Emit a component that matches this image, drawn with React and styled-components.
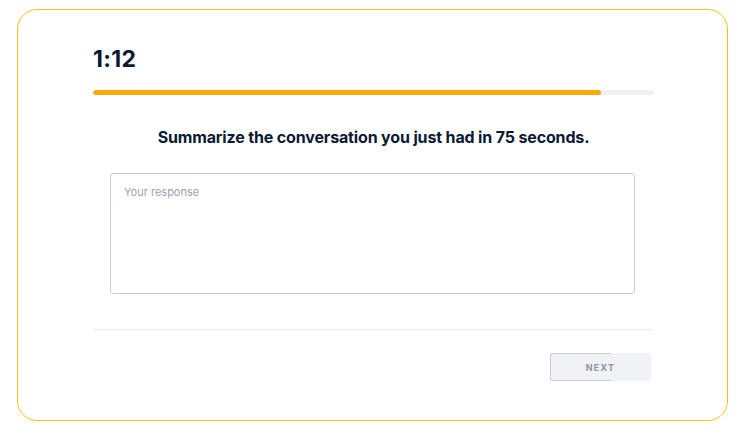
import React, { useState } from "react";
import styled, { createGlobalStyle } from "styled-components";

const GlobalStyle = createGlobalStyle`
  body {
    margin: 0;
    background: #ffffff;
    font-family: "Inter", "Noto Sans", sans-serif;
  }
`;

const Page = styled.div`
  padding: 9px 0 0 17px;
`;

const Card = styled.div`
  box-sizing: border-box;
  width: 711px;
  height: 412px;
  border: 1.6px solid #fcc10f;
  border-radius: 20px;
  padding: 34px 73px 0 75px;
  display: flex;
  flex-direction: column;
`;

const Timer = styled.div`
  font-size: 23px;
  line-height: 30px;
  font-weight: 700;
  color: #0b1a33;
  letter-spacing: 0.3px;
`;

const Track = styled.div`
  margin-top: 16px;
  height: 5px;
  border-radius: 3px;
  background: #eff2f5;
  overflow: hidden;
`;

const Fill = styled.div`
  height: 100%;
  border-radius: 3px;
  background: #fdaa06;
`;

const Prompt = styled.h2`
  margin: 31px 0 0;
  text-align: center;
  font-size: 16px;
  line-height: 22px;
  font-weight: 700;
  color: #0b1a33;
  letter-spacing: -0.15px;
`;

const Response = styled.textarea`
  box-sizing: border-box;
  margin: 25px 19px 0 17px;
  height: 121px;
  border: 1px solid #c8ccd2;
  border-radius: 3px;
  padding: 11px 13px;
  resize: none;
  font-family: inherit;
  font-size: 11px;
  color: #0b1a33;
  outline: none;
  &::placeholder {
    color: #9aa2ad;
  }
`;

const Divider = styled.hr`
  margin: 35px 2px 0 0;
  border: none;
  border-top: 1px solid #e6e8ec;
`;

const Footer = styled.div`
  display: flex;
  justify-content: flex-end;
  margin-top: 23px;
  padding-right: 3px;
`;

const NextButton = styled.button`
  position: relative;
  box-sizing: border-box;
  width: 101px;
  height: 28px;
  border: none;
  border-radius: 3px;
  background: #f0f2f5;
  color: #8d96a2;
  font-family: inherit;
  font-size: 9px;
  font-weight: 700;
  letter-spacing: 1.2px;
  cursor: not-allowed;
  &::before {
    content: "";
    position: absolute;
    left: 0;
    top: 0;
    bottom: 0;
    width: 60px;
    border: 1px solid #c9ced8;
    border-right: none;
    border-radius: 3px 0 0 3px;
  }
`;

const App = () => {
  const [text, setText] = useState("");
  const progress = 90.5;

  return (
    <Page>
      <GlobalStyle />
      <Card>
        <Timer>1:12</Timer>
        <Track>
          <Fill style={{ width: `${progress}%` }} />
        </Track>
        <Prompt>Summarize the conversation you just had in 75 seconds.</Prompt>
        <Response
          placeholder="Your response"
          value={text}
          onChange={(e) => setText(e.target.value)}
        />
        <Divider />
        <Footer>
          <NextButton disabled>NEXT</NextButton>
        </Footer>
      </Card>
    </Page>
  );
};

export default App;
